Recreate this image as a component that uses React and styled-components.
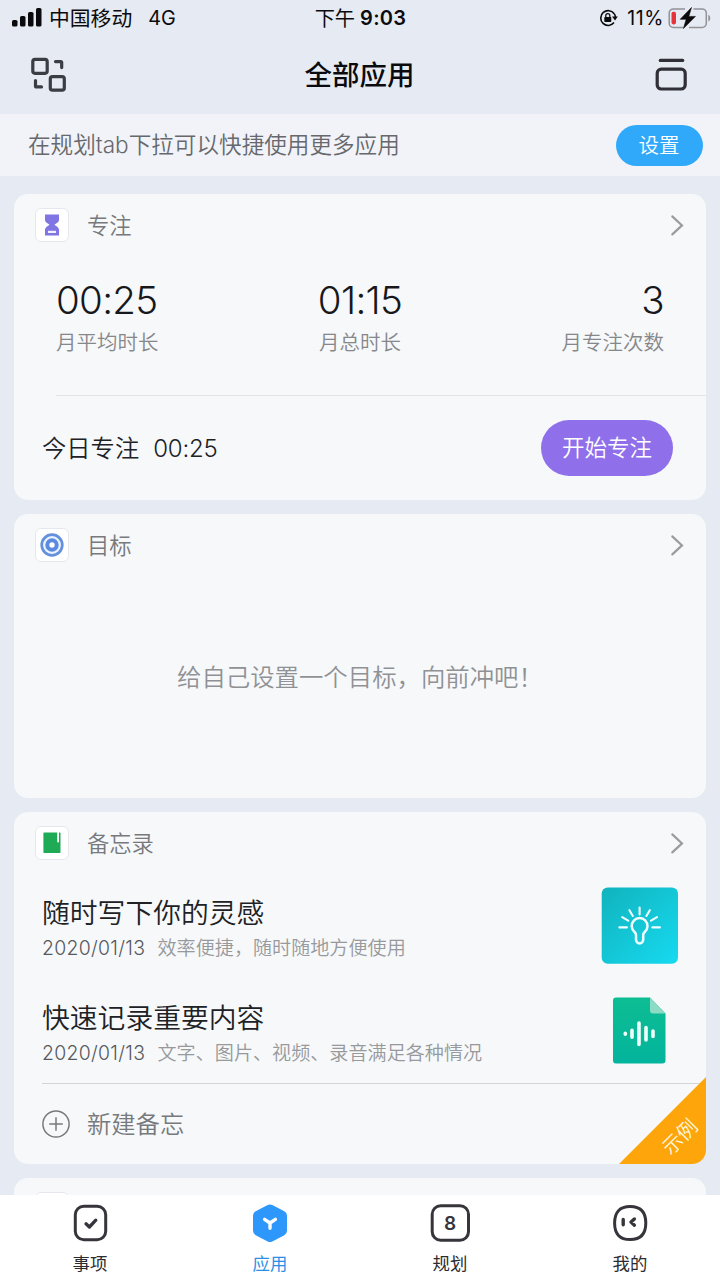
import React from 'react'
import styled, { createGlobalStyle } from 'styled-components'

const GlobalStyle = createGlobalStyle`
  * {
    box-sizing: border-box;
  }
  body {
    margin: 0;
    background-color: #e6eaf2;
    font-family: Inter, 'Noto Sans CJK SC', sans-serif;
    font-weight: 350;
  }
`

const Page = styled('div')`
  width: 720px;
  height: 1280px;
  display: flex;
  flex-direction: column;
  overflow: hidden;
  background-color: #e6eaf2;
`

const StatusBar = styled('div')`
  height: 36px;
  flex: none;
  display: grid;
  grid-template-columns: 1fr auto 1fr;
  align-items: center;
  padding: 0 9px 0 12px;
  color: #0b0b0d;
  font-size: 19px;
  line-height: 35px;
  font-weight: 400;
`

const StatusGroup = styled('div')`
  display: flex;
  align-items: center;
  justify-content: ${props => props.$end ? 'flex-end' : 'flex-start'};
  white-space: nowrap;
`

const Carrier = styled('span')`
  margin-left: 6px;
  padding-top: 1px;
  font-size: 20.8px;
`

const Network = styled('span')`
  margin-left: 16px;
  padding-top: 1px;
  font-size: 19.8px;
`

const Clock = styled('div')`
  display: flex;
  gap: 5px;
  padding: 1px 2px 0 0;
  font-size: 20.2px;
`

const ClockTime = styled('span')`
  font-size: 20px;
  font-weight: 600;
  letter-spacing: 0.3px;
`

const Battery = styled('span')`
  margin: 0 4px 0 9px;
  padding-top: 1px;
  font-size: 19.5px;
  letter-spacing: 0.6px;
`

const NavBar = styled('div')`
  height: 78px;
  flex: none;
  display: flex;
  align-items: center;
  justify-content: space-between;
  padding: 0 32px 0 30px;
`

const NavTitle = styled('div')`
  margin-right: 2px;
  font-size: 27.5px;
  line-height: 40px;
  font-weight: 500;
  color: #0b0b0d;
`

const Notice = styled('div')`
  height: 62px;
  flex: none;
  display: flex;
  align-items: center;
  justify-content: space-between;
  padding: 0 17.5px 0 28px;
  background-color: #f1f3f8;
  color: #66686c;
  font-size: 22.6px;
  line-height: 40px;
`

const SettingButton = styled('div')`
  width: 87px;
  height: 41px;
  border-radius: 21px;
  background-color: #30a9fb;
  color: white;
  font-size: 20.5px;
  line-height: 41px;
  text-align: center;
`

const Content = styled('div')`
  flex: 1;
  min-height: 0;
  overflow: hidden;
  display: flex;
  flex-direction: column;
  gap: 14px;
  padding: 18px 14px 0;
`

const Card = styled('div')`
  position: relative;
  flex: none;
  height: ${props => props.$height}px;
  border-radius: 14px;
  background-color: #f6f8fa;
  overflow: hidden;
`

const CardHeader = styled('div')`
  display: flex;
  align-items: center;
  height: 34px;
  margin: 14px 22px 0 21px;
`

const CardIcon = styled('div')`
  width: 34px;
  height: 34px;
  display: flex;
  align-items: center;
  justify-content: center;
  background-color: white;
  border: 1px solid #e6e7ec;
  border-radius: 6px;
`

const CardTitle = styled('div')`
  flex: 1;
  margin-left: 18px;
  padding-top: 2px;
  font-size: 22.3px;
  line-height: 34px;
  color: #77797c;
`

const Stats = styled('div')`
  display: grid;
  grid-template-columns: 1fr 1fr 1fr;
  margin: 34px 42px 36px;
`

const Stat = styled('div')`
  text-align: ${props => props.$align};
`

const StatValue = styled('div')`
  font-size: 38.5px;
  line-height: 48px;
  letter-spacing: -0.7px;
  color: #17181b;
`

const StatLabel = styled('div')`
  margin-top: 3px;
  font-size: 20.5px;
  line-height: 32px;
  color: #85878a;
`

const Divider = styled('div')`
  height: 1px;
  margin-left: ${props => props.$left}px;
  background-color: ${props => props.$color};
`

const FocusRow = styled('div')`
  display: flex;
  align-items: center;
  height: 104px;
  padding: 0 33px 0 28px;
  font-size: 24.3px;
  line-height: 40px;
  color: #202124;
`

const FocusTime = styled('div')`
  flex: 1;
  margin-left: 14px;
  padding-top: 1px;
  font-size: 24px;
  letter-spacing: -0.2px;
`

const FocusButton = styled('div')`
  width: 132px;
  height: 56px;
  border-radius: 28px;
  background-color: #8f70ea;
  color: white;
  font-size: 22.5px;
  line-height: 56px;
  text-align: center;
`

const EmptyText = styled('div')`
  margin: 95px 0 0 163px;
  font-size: 24.4px;
  line-height: 40px;
  color: #909195;
`

const MemoList = styled('div')`
  padding-top: 13px;
`

const Memo = styled('div')`
  display: flex;
  align-items: center;
  height: 105px;
  padding: 0 28px;
`

const MemoBody = styled('div')`
  flex: 1;
  padding-top: 4px;
`

const MemoTitle = styled('div')`
  font-size: 27.8px;
  line-height: 40px;
  color: #202124;
`

const MemoInfo = styled('div')`
  display: flex;
  font-size: 19.1px;
  line-height: 30px;
  color: #97999c;
`

const MemoDate = styled('span')`
  width: 115.5px;
  font-size: 19.4px;
  letter-spacing: 0.3px;
  color: #56585c;
`

const MemoCover = styled('div')`
  width: 77px;
  display: flex;
  justify-content: center;
`

const NewMemo = styled('div')`
  display: flex;
  align-items: center;
  gap: 17px;
  height: 80px;
  padding-left: 28px;
  font-size: 24.3px;
  line-height: 40px;
  color: #77797c;
`

const Ribbon = styled('div')`
  position: absolute;
  right: 0;
  bottom: 0;
  width: 87px;
  height: 87px;
  background-color: #fda50b;
  clip-path: polygon(100% 0, 100% 100%, 0 100%);
`

const RibbonText = styled('div')`
  position: absolute;
  left: 31px;
  top: 46px;
  width: 60px;
  font-size: 20px;
  line-height: 28px;
  text-align: center;
  color: #fff6df;
  transform: rotate(-45deg);
`

const TabBar = styled('div')`
  height: 85px;
  flex: none;
  display: grid;
  grid-template-columns: repeat(4, 1fr);
  background-color: white;
`

const Tab = styled('div')`
  display: flex;
  flex-direction: column;
  align-items: center;
  padding-top: 8px;
  font-size: 17.4px;
  line-height: 26px;
  font-weight: 400;
  color: ${props => props.$active ? '#2b8fe6' : '#2c2c2f'};
`

const TabLabel = styled('div')`
  margin-top: 8px;
`

const TabDigit = styled('text')`
  font-family: Inter, sans-serif;
  font-size: 19px;
  font-weight: 600;
`

const SignalIcon = () => (
  <svg width='31' height='20' viewBox='0 0 31 20' fill='#0b0b0d'>
    <rect x='0' y='12' width='5.5' height='6.6' rx='1.6' />
    <rect x='8' y='8' width='5.5' height='10.6' rx='1.6' />
    <rect x='16' y='4' width='5.5' height='14.6' rx='1.6' />
    <rect x='24' y='0' width='5.5' height='18.6' rx='1.6' />
  </svg>
)

const LockIcon = () => (
  <svg width='19' height='18' viewBox='0 0 19 18' fill='none' stroke='#0b0b0d' strokeWidth='1.6'>
    <path d='M15.2 4.8A7.4 7.4 0 1 0 15 13.6' />
    <path d='M15.2 4.6c.8 1.1 1.2 2.4 1.3 4' />
    <path d='M13 7.6h5.8L16 11.6z' fill='#0b0b0d' stroke='none' />
    <rect x='5.3' y='8' width='7' height='5' rx='.8' fill='#0b0b0d' stroke='none' />
    <path d='M6.8 8.4V6.6a2 2 0 0 1 4 0v1.8' strokeWidth='1.3' />
  </svg>
)

const BatteryIcon = () => (
  <svg width='43' height='22' viewBox='0 0 43 22' fill='none'>
    <path d='M17 1.9H5.4A4.2 4.2 0 0 0 1.2 6v10.2a4.2 4.2 0 0 0 4.2 4.2H15M25.5 1.9h8.6A4.2 4.2 0 0 1 38.3 6v10.2a4.2 4.2 0 0 1-4.2 4.2H21' stroke='#929399' strokeWidth='1.5' />
    <path d='M40.3 7.8c2.6.8 2.6 6 0 6.8z' fill='#929399' />
    <rect x='3.5' y='4.8' width='4.5' height='12.6' rx='1.8' fill='#e5343b' />
    <path d='M23.5.5 12.2 12.3h6l-2.8 9.3L27.4 9.4h-6.6z' fill='#0b0b0d' stroke='#0b0b0d' strokeWidth='.6' />
  </svg>
)

const GridIcon = () => (
  <svg width='37' height='36' viewBox='0 0 37 36' fill='none' stroke='#3b3d44' strokeWidth='3.2' strokeLinecap='round' strokeLinejoin='round'>
    <rect x='2.8' y='2.3' width='14.4' height='14' rx='2.2' />
    <rect x='20.3' y='19.6' width='14' height='13.6' rx='2.2' />
    <path d='M25.5 4.6h5.2q1 0 1 1v5' />
    <path d='M5.5 23.5v5.4q0 1 1 1h5' />
  </svg>
)

const StackIcon = () => (
  <svg width='34' height='34' viewBox='0 0 34 34' fill='none' stroke='#302f37' strokeLinecap='round'>
    <path d='M6.3 2.4h22.4' strokeWidth='3.2' />
    <rect x='3.2' y='11.2' width='28' height='19.8' rx='4' strokeWidth='3.2' />
  </svg>
)

const ArrowIcon = () => (
  <svg width='14' height='22' viewBox='0 0 14 22' fill='none' stroke='#9b9ca0' strokeWidth='2.2' strokeLinecap='round'>
    <path d='M2.3 2.4 12 11.4 2.3 20.4' />
  </svg>
)

const HourglassIcon = () => (
  <svg width='16' height='22' viewBox='0 0 16 22'>
    <path d='M1 .5h14v5.2c0 2.6-3 3.8-4.5 5.1 1.5 1.2 4.5 2.4 4.5 5.200v5.500H1V16c0-2.800 3-4 4.500-5.200C4 9.500 1 8.300 1 5.700z' fill='#7f75e3' />
    <rect x='4' y='16.800' width='8' height='2.200' fill='#f2f0ff' />
  </svg>
)

const TargetIcon = () => (
  <svg width='24' height='24' viewBox='0 0 24 24'>
    <circle cx='12' cy='12' r='10.3' fill='#eaf4ff' stroke='#6590dc' strokeWidth='2.7' />
    <circle cx='12' cy='12' r='4.7' fill='white' stroke='#5b8ae0' strokeWidth='4' />
  </svg>
)

const NotebookIcon = () => (
  <svg width='18' height='22' viewBox='0 0 18 22'>
    <path d='M1.200.5h13v8.800c0 1.600 1.800 1.600 1.800 0V.5h.700q.8 0 .8.800v19q0 .8-.8.800H1.200q-.8 0-.8-.8v-19q0-.8.800-.8z' fill='#1fab56' />
  </svg>
)

const IdeaCover = () => (
  <svg width='77' height='77' viewBox='0 0 77 77'>
    <defs>
      <linearGradient id='idea' x1='0' y1='0' x2='1' y2='1'>
        <stop offset='0' stopColor='#10b3bd' />
        <stop offset='1' stopColor='#17daf0' />
      </linearGradient>
    </defs>
    <rect x='.7' y='.5' width='76.3' height='76.3' rx='6' fill='url(#idea)' />
    <g fill='none' stroke='#effeff' strokeWidth='2.5' strokeLinecap='round'>
      <path d='M35 48.2c0-1.8-.4-2.3-1.5-3.2a7.9 7.9 0 1 1 10.2 0c-1.1.9-1.5 1.4-1.5 3.2v4.6a3.6 3.6 0 0 1-7.2 0z' />
      <path d='M38.6 20.5v7M28.400 23.200l3.400 5.800M48.800 23.200l-3.400 5.800M21.200 30.200l6 3.500M56 30.200l-6 3.500M18.400 40.400h7.500M51.400 40.400h7.500' strokeWidth='2.1' />
    </g>
  </svg>
)

const VoiceCover = () => (
  <svg width='53' height='67' viewBox='0 0 53 67'>
    <defs>
      <linearGradient id='voice' x1='0' y1='0' x2='0' y2='1'>
        <stop offset='0' stopColor='#0dbd92' />
        <stop offset='1' stopColor='#03b49d' />
      </linearGradient>
    </defs>
    <path d='M3 .5h34l15.500 16V63.500a3 3 0 0 1-3 3H3a3 3 0 0 1-3-3V3.500a3 3 0 0 1 3-3z' fill='url(#voice)' />
    <path d='M37 .5 52.500 16.500H40a3 3 0 0 1-3-3z' fill='#8cdbc4' />
    <g stroke='#effffa' strokeWidth='3.6' strokeLinecap='round'>
      <path d='M12.300 36.300v1M19 33.200v7M26 26v21.500M33 30.500v12.400M40 34v5.500' />
    </g>
  </svg>
)

const PlusIcon = () => (
  <svg width='28' height='28' viewBox='0 0 28 28' fill='none' stroke='#77797c' strokeWidth='1.5'>
    <circle cx='14' cy='14' r='13.1' />
    <path d='M14 7.2v13.6M7.2 14h13.6' />
  </svg>
)

const TodoIcon = () => (
  <svg width='40' height='40' viewBox='0 0 40 40' fill='none' stroke='#37353b' strokeWidth='3' strokeLinecap='round' strokeLinejoin='round'>
    <rect x='5.3' y='3.2' width='30.4' height='33.6' rx='8.5' />
    <path d='m16 20.800 3.400 3.200 6.400-6.800' strokeWidth='3.3' />
  </svg>
)

const AppsIcon = () => (
  <svg width='40' height='40' viewBox='0 0 40 40' fill='none' strokeLinecap='round' strokeLinejoin='round'>
    <path d='M20 6.500 32 12.800v14.900L20 34 8 27.700V12.800z' fill='#2d97fb' stroke='#2d97fb' strokeWidth='10' />
    <path d='m14.600 16.400 5.400 3.600 5.400-3.600M20 20.500v4.800' stroke='white' strokeWidth='3.4' />
  </svg>
)

const PlanIcon = () => (
  <svg width='42' height='40' viewBox='0 0 42 40'>
    <rect x='3.2' y='2.7' width='36.3' height='34.6' rx='8.5' fill='none' stroke='#37353b' strokeWidth='3' />
    <TabDigit x='21.200' y='27' textAnchor='middle' fill='#37353b'>8</TabDigit>
  </svg>
)

const MineIcon = () => (
  <svg width='40' height='40' viewBox='0 0 40 40' fill='none' stroke='#37353b' strokeWidth='3' strokeLinecap='round' strokeLinejoin='round'>
    <path d='M20.2 3.6c10.5 0 15.6 5.6 15.6 16.5s-5.1 16.5-15.6 16.5S4.600 31 4.600 20.100 9.700 3.600 20.200 3.600z' />
    <path d='M13.200 16.400v5.300M24.400 16l-3.400 3.100 3.400 3.100' strokeWidth='3.4' />
  </svg>
)

const memos = [
  { title: '随时写下你的灵感', date: '2020/01/13', text: '效率便捷，随时随地方便使用', cover: <IdeaCover /> },
  { title: '快速记录重要内容', date: '2020/01/13', text: '文字、图片、视频、录音满足各种情况', cover: <VoiceCover /> }
]

const tabs = [
  { name: '事项', icon: <TodoIcon /> },
  { name: '应用', icon: <AppsIcon />, active: true },
  { name: '规划', icon: <PlanIcon /> },
  { name: '我的', icon: <MineIcon /> }
]

const Header = ({ icon, title }) => (
  <CardHeader>
    <CardIcon>{icon}</CardIcon>
    <CardTitle>{title}</CardTitle>
    {title && <ArrowIcon />}
  </CardHeader>
)

const App = () => {
  return (
    <Page>
      <GlobalStyle />
      <StatusBar>
        <StatusGroup>
          <SignalIcon />
          <Carrier>中国移动</Carrier>
          <Network>4G</Network>
        </StatusGroup>
        <Clock>
          <span>下午</span>
          <ClockTime>9:03</ClockTime>
        </Clock>
        <StatusGroup $end>
          <LockIcon />
          <Battery>11%</Battery>
          <BatteryIcon />
        </StatusGroup>
      </StatusBar>
      <NavBar>
        <GridIcon />
        <NavTitle>全部应用</NavTitle>
        <StackIcon />
      </NavBar>
      <Notice>
        <div>在规划tab下拉可以快捷使用更多应用</div>
        <SettingButton>设置</SettingButton>
      </Notice>
      <Content>
        <Card $height={306}>
          <Header icon={<HourglassIcon />} title='专注' />
          <Stats>
            <Stat $align='left'>
              <StatValue>00:25</StatValue>
              <StatLabel>月平均时长</StatLabel>
            </Stat>
            <Stat $align='center'>
              <StatValue>01:15</StatValue>
              <StatLabel>月总时长</StatLabel>
            </Stat>
            <Stat $align='right'>
              <StatValue>3</StatValue>
              <StatLabel>月专注次数</StatLabel>
            </Stat>
          </Stats>
          <Divider $left={42} $color='#e1e3e7' />
          <FocusRow>
            <div>今日专注</div>
            <FocusTime>00:25</FocusTime>
            <FocusButton>开始专注</FocusButton>
          </FocusRow>
        </Card>
        <Card $height={284}>
          <Header icon={<TargetIcon />} title='目标' />
          <EmptyText>给自己设置一个目标，向前冲吧！</EmptyText>
        </Card>
        <Card $height={352}>
          <Header icon={<NotebookIcon />} title='备忘录' />
          <MemoList>
            {
              memos.map(item => (
                <Memo key={item.title}>
                  <MemoBody>
                    <MemoTitle>{item.title}</MemoTitle>
                    <MemoInfo>
                      <MemoDate>{item.date}</MemoDate>
                      <span>{item.text}</span>
                    </MemoInfo>
                  </MemoBody>
                  <MemoCover>{item.cover}</MemoCover>
                </Memo>
              ))
            }
          </MemoList>
          <Divider $left={28} $color='#d2d4d9' />
          <NewMemo>
            <PlusIcon />
            <div>新建备忘</div>
          </NewMemo>
          <Ribbon>
            <RibbonText>示例</RibbonText>
          </Ribbon>
        </Card>
        <Card $height={300}>
          <Header />
        </Card>
      </Content>
      <TabBar>
        {
          tabs.map(item => (
            <Tab key={item.name} $active={item.active}>
              {item.icon}
              <TabLabel>{item.name}</TabLabel>
            </Tab>
          ))
        }
      </TabBar>
    </Page>
  )
}

export default App
